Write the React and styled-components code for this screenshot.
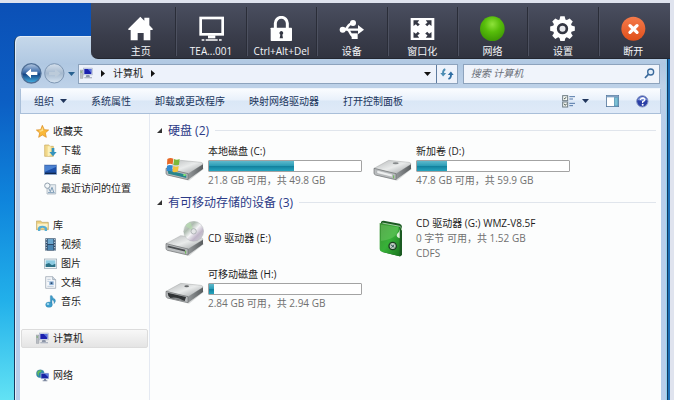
import React from "react";
import styled, { createGlobalStyle } from "styled-components";

const GlobalStyle = createGlobalStyle`
    * {
        box-sizing: border-box;
    }

    body {
        margin: 0;
        background: #dfe3ee;
        font-family: "Open Sans", "Noto Sans CJK SC", sans-serif;
        font-size: 10px;
        line-height: 15px;
        color: #1c1c1c;
    }

    button, input {
        font: inherit;
        color: inherit;
        border: 0;
        padding: 0;
        background: none;
    }

    a {
        color: inherit;
        text-decoration: none;
    }

    svg {
        display: block;
        flex: none;
    }
`

const Page = styled.div`
    position: relative;
    height: 100vh;
    padding: 3px 4px 0 0;
    overflow: hidden;
`

const Desktop = styled.div`
    display: flex;
    height: 100%;
    padding: 33px 2px 0 14px;
    background: linear-gradient(90deg, transparent 50%, #1c6fb8 50%),
        linear-gradient(#0b50b6 0%, #0c5fc4 25%, #0f85dc 50%, #22b0ea 75%, #62e2f4 100%);
`

const Dock = styled.div`
    position: absolute;
    top: 3px;
    right: 4px;
    left: 91px;
    display: flex;
    height: 56px;
    padding: 0 2px 0 15px;
    border-bottom: 1px solid #23262f;
    border-bottom-left-radius: 7px;
    background: linear-gradient(#4a4f60, #3a3d4b 60%, #30333f);
`

const DockButton = styled.button`
    display: flex;
    flex: 1 1 0;
    flex-direction: column;
    align-items: center;
    gap: 3px;
    margin: 4px 0 2px;
    padding-top: 9px;
    color: #f4f5f8;
    white-space: nowrap;

    & + & {
        border-left: 1px solid #2a2d38;
        box-shadow: inset 1px 0 #4d5160;
    }
`

const Window = styled.div`
    display: flex;
    flex: 1;
    flex-direction: column;
    min-width: 0;
    padding: 0 6px 0 5px;
    border: solid #16395f;
    border-width: 0 1px;
    border-radius: 6px 6px 0 0;
    background: linear-gradient(#c6d8ea 0, #b0c8e2 28px, #bdd1e8 50px, #b7cdeb 110px);
    box-shadow: inset 1px 1px #e2ecf6, inset -1px 0 #8fd0ee;
`

const AddressRow = styled.div`
    display: flex;
    align-items: center;
    gap: 3px;
    margin-top: 27px;
    padding: 0 1px;
`

const RoundButtons = styled.div`
    display: flex;
    gap: 2px;
`

const AddressBox = styled.div`
    display: flex;
    flex: 377;
    align-items: center;
    height: 20px;
    border: 1px solid #8da3bd;
    background: #edf2fb;
`

const Crumb = styled.button`
    display: flex;
    align-items: center;
    gap: 8px;
    padding-left: 1px;
`

const DropButton = styled.button`
    margin-left: auto;
    padding: 5px;
`

const RefreshButton = styled.button`
    display: flex;
    align-items: center;
    height: 18px;
    padding: 0 3px;
    border-left: 1px solid #5d7ba0;
`

const SearchBox = styled.label`
    display: flex;
    flex: 184;
    align-items: center;
    height: 20px;
    margin-left: 2px;
    padding: 0 4px 0 7px;
    border: 1px solid #8da3bd;
    background: #f0f4fb;
`

const SearchInput = styled.input`
    flex: 1;
    min-width: 0;
    font-style: italic;
    outline: none;

    &::placeholder {
        color: #6a6f78;
        opacity: 1;
    }
`

const Toolbar = styled.div`
    display: flex;
    align-items: center;
    gap: 24px;
    height: 26px;
    margin-top: 4px;
    padding: 0 11px 0 13px;
    border: 1px solid #a9bfd9;
    border-top-color: #eff5fc;
    background: linear-gradient(#fafcff, #e9f1fb 45%, #dae7f6 50%, #dfeaf8);
    color: #20355c;
`

const ToolButton = styled.button`
    display: flex;
    align-items: center;
    gap: 6px;
    white-space: nowrap;
`

const ViewTools = styled.div`
    display: flex;
    align-items: center;
    gap: 17px;
    margin-left: auto;
`

const Content = styled.div`
    display: flex;
    flex: 1;
    min-height: 0;
    background: #fcfdfd;
`

const Sidebar = styled.nav`
    display: flex;
    flex: none;
    flex-direction: column;
    gap: 18px;
    width: 130px;
    padding: 8px 1px;
    border-right: 1px solid #e4e9f2;
`

const SideLink = styled.a`
    display: flex;
    align-items: center;
    gap: 4px;
    height: 19px;
    padding-left: ${(props) => props.$nested ? "22px" : "14px"};
    border: 1px solid ${(props) => props.$selected ? "#dcdcdc" : "transparent"};
    border-radius: 2px;
    background: ${(props) => props.$selected ? "linear-gradient(#f8f8f8, #e4e4e4)" : "none"};
    white-space: nowrap;
`

const Main = styled.main`
    display: flex;
    flex: 1;
    flex-direction: column;
    gap: 4px;
    min-width: 0;
    padding: 6px 5px 0 7px;
`

const GroupTitle = styled.h2`
    display: flex;
    align-items: center;
    gap: 6px;
    height: 20px;
    margin: 0 0 4px;
    font-size: 12px;
    font-weight: 400;
    color: #2b3a87;
    white-space: nowrap;

    &::after {
        content: "";
        flex: 1;
        height: 1px;
        background: #e0e5ec;
    }
`

const Drives = styled.div`
    display: grid;
    grid-template-columns: repeat(auto-fill, 208px);
    grid-auto-rows: minmax(44px, auto);
    row-gap: 6px;
    padding-left: 8px;
`

const Drive = styled.div`
    display: flex;
    align-items: center;
    gap: 4px;
`

const DriveInfo = styled.div`
    display: flex;
    flex-direction: column;
    width: 154px;
    white-space: nowrap;
`

const Detail = styled.span`
    color: #707070;
`

const Meter = styled.div`
    height: 12px;
    margin: 1px 0;
    border: 1px solid #a3a3a3;
    border-radius: 1px;
    background: #fff;
`

const MeterFill = styled.div`
    height: 100%;
    background: linear-gradient(#5fb9cc, #2e9fb8 45%, #127e9b 50%, #25a5bf);
`

const HomeIcon = () => (
    <svg width="25" height="25" viewBox="0 0 75 75">
        <path d="M37 2L49 14V5H64V28L74 38V42H67V73H47V51H29V73H8V42H1V38Z" fill="#fff" />
    </svg>
)

const MonitorIcon = () => (
    <svg width="25" height="25" viewBox="0 0 75 75">
        <rect x="5" y="6" width="66" height="49" fill="none" stroke="#fff" strokeWidth="8" />
        <path d="M27 58H49V67H27Z" fill="#fff" />
        <path d="M8 72H16M20 72H56M60 72H68" stroke="#fff" strokeWidth="4" />
    </svg>
)

const LockIcon = () => (
    <svg width="25" height="25" viewBox="0 0 75 75">
        <path d="M19 38V22a18 18 0 0 1 36 0V38" fill="none" stroke="#fff" strokeWidth="9" />
        <rect x="5" y="35" width="64" height="40" rx="2" fill="#fff" />
        <path d="M37 45a6 6 0 0 1 3 11l2 11H32l2-11a6 6 0 0 1 3-11Z" fill="#343743" />
    </svg>
)

const UsbIcon = () => (
    <svg width="25" height="25" viewBox="0 0 75 75">
        <path d="M10 41H62M17 41C28 38 24 22 42 22M25 41C36 44 31 61 46 61" fill="none" stroke="#fff" strokeWidth="7" />
        <circle cx="11" cy="41" r="9" fill="#fff" />
        <circle cx="42" cy="21" r="9" fill="#fff" />
        <rect x="38" y="52" width="18" height="17" fill="#fff" />
        <path d="M57 27L75 41L57 55Z" fill="#fff" />
    </svg>
)

const WindowedIcon = () => (
    <svg width="25" height="25" viewBox="0 0 75 75">
        <rect x="2" y="6" width="71" height="66" fill="#fff" />
        {[[1, 1], [-1, 1], [1, -1], [-1, -1]].map(([x, y]) => (
            <path
                key={x + "," + y}
                transform={`translate(37.5 39) scale(${x} ${y})`}
                d="M8 14L14 8L20 14L27 9V26H10L15 19Z"
                fill="#343743"
            />
        ))}
    </svg>
)

const NetworkIcon = () => (
    <svg width="25" height="25" viewBox="0 0 75 75">
        <defs>
            <radialGradient id="ball" cx="50%" cy="32%" r="65%">
                <stop offset="0" stopColor="#8ee23a" />
                <stop offset="0.5" stopColor="#57bd0a" />
                <stop offset="1" stopColor="#3f9a05" />
            </radialGradient>
        </defs>
        <circle cx="37" cy="38" r="37" fill="url(#ball)" />
    </svg>
)

const GearIcon = () => (
    <svg width="25" height="25" viewBox="0 0 75 75">
        <g fill="#fff">
            {[0, 45, 90, 135].map(a => (
                <path key={a} transform={`rotate(${a} 37.5 38)`} d="M29 9L31 1H44L46 9V67L44 75H31L29 67Z" />
            ))}
            <circle cx="37.5" cy="38" r="29" />
        </g>
        <circle cx="37.5" cy="38" r="13" fill="#e9eaee" stroke="#343743" strokeWidth="8" />
    </svg>
)

const CloseIcon = () => (
    <svg width="25" height="25" viewBox="0 0 75 75">
        <defs>
            <linearGradient id="red" x2="0" y2="1">
                <stop offset="0" stopColor="#f47a4a" />
                <stop offset="1" stopColor="#e0501c" />
            </linearGradient>
        </defs>
        <circle cx="37" cy="38" r="36" fill="url(#red)" />
        <path d="M27 29L48 49M48 29L27 49" stroke="#fff" strokeWidth="10" strokeLinecap="round" />
    </svg>
)

const BackIcon = () => (
    <svg width="21" height="21" viewBox="0 0 63 63">
        <defs>
            <linearGradient id="back" x2="0" y2="1">
                <stop offset="0" stopColor="#b5c9e2" />
                <stop offset="0.45" stopColor="#3c6ba9" />
                <stop offset="0.55" stopColor="#154584" />
                <stop offset="1" stopColor="#46b4e6" />
            </linearGradient>
        </defs>
        <circle cx="31" cy="31" r="29" fill="url(#back)" stroke="#4f6f96" strokeWidth="4" />
        <path d="M14 31L30 17V26H49V36H30V46Z" fill="#fff" />
    </svg>
)

const ForwardIcon = () => (
    <svg width="21" height="21" viewBox="0 0 63 63">
        <defs>
            <linearGradient id="fwd" x2="0" y2="1">
                <stop offset="0" stopColor="#d5e0ec" />
                <stop offset="0.5" stopColor="#a5b9cf" />
                <stop offset="1" stopColor="#d6e4f1" />
            </linearGradient>
        </defs>
        <circle cx="31" cy="31" r="29" fill="url(#fwd)" stroke="#7f97b3" strokeWidth="3" />
        <path d="M49 31L33 18V27H15V36H33V45Z" fill="#bccbda" />
    </svg>
)

const DownArrow = ({ color = "#111" }) => (
    <svg width="7" height="4" viewBox="0 0 14 8">
        <path d="M0 0H14L7 8Z" fill={color} />
    </svg>
)

const RightArrow = () => (
    <svg width="4" height="7" viewBox="0 0 8 14">
        <path d="M0 0V14L8 7Z" fill="#111" />
    </svg>
)

const ComputerIcon = () => (
    <svg width="13" height="13" viewBox="0 0 39 39">
        <rect x="1" y="9" width="8" height="25" fill="#b9bdc2" stroke="#7e868e" />
        <rect x="2" y="13" width="3" height="4" fill="#5ba84b" />
        <rect x="10" y="3" width="27" height="21" fill="#cdd7ea" stroke="#8996b4" />
        <rect x="13" y="6" width="21" height="15" fill="#1a1fae" />
        <path d="M23 6H34V18Z" fill="#5570dc" />
        <path d="M19 24H28L30 31H17Z" fill="#8d96a8" />
        <path d="M13 32H36" stroke="#aeb5c2" strokeWidth="4" />
    </svg>
)

const RefreshIcon = () => (
    <svg width="14" height="14" viewBox="0 0 45 42">
        <path d="M17 5C9 8 9 14 10 21" fill="none" stroke="#4d8db3" strokeWidth="6" />
        <path d="M1 18H20L10 29Z" fill="#4d8db3" />
        <path d="M27 37C36 34 36 28 35 21" fill="none" stroke="#2f6ea3" strokeWidth="6" />
        <path d="M25 24H44L35 13Z" fill="#2f6ea3" />
    </svg>
)

const SearchIcon = () => (
    <svg width="11" height="11" viewBox="0 0 33 33">
        <circle cx="20" cy="12" r="9" fill="#e4effa" stroke="#3b6a9c" strokeWidth="4" />
        <path d="M13 19L3 30" stroke="#3b6a9c" strokeWidth="5" />
    </svg>
)

const ViewIcon = () => (
    <svg width="14" height="13" viewBox="0 0 42 39">
        <g fill="#f4f7f4" stroke="#6d7b82" strokeWidth="3">
            <rect x="2" y="2" width="15" height="15" />
            <rect x="2" y="21" width="15" height="15" />
        </g>
        <path d="M6 12L13 7M6 26L10 31L14 26" stroke="#4b5a50" strokeWidth="3" fill="none" />
        <path d="M22 5H39M22 12H33M22 25H39M22 32H33" stroke="#5277a8" strokeWidth="3" />
    </svg>
)

const PaneIcon = () => (
    <svg width="13" height="12" viewBox="0 0 39 36">
        <rect x="1" y="1" width="37" height="34" fill="#fff" stroke="#56789d" strokeWidth="3" />
        <rect x="2" y="2" width="35" height="5" fill="#7fa0c2" />
        <rect x="25" y="8" width="11" height="25" fill="#7cc0d4" stroke="#4b8db0" strokeWidth="2" />
    </svg>
)

const HelpIcon = () => (
    <svg width="13" height="13" viewBox="0 0 39 39">
        <circle cx="19" cy="19" r="17" fill="#2b3fa6" stroke="#8797c4" strokeWidth="3" />
        <path d="M5 15a15 15 0 0 1 28 0Q19 20 5 15Z" fill="#7f95da" />
        <path d="M13 15Q14 9 20 9Q27 10 26 15Q25 18 20 20V24" fill="none" stroke="#fff" strokeWidth="4" />
        <circle cx="20" cy="29" r="3" fill="#fff" />
    </svg>
)

const StarIcon = () => (
    <svg width="13" height="13" viewBox="0 0 39 39">
        <path d="M19 1L25 14L38 15L28 24L31 37L19 30L8 37L11 24L1 15L14 14Z" fill="#f9b93a" stroke="#d98a1d" strokeWidth="2" />
        <path d="M19 6L22 17L13 20L8 17L16 16Z" fill="#fde08c" />
    </svg>
)

const DownloadIcon = () => (
    <svg width="13" height="13" viewBox="0 0 39 39">
        <path d="M2 3H14L18 7H28V37H2Z" fill="#f1d88a" stroke="#c9a95a" strokeWidth="2" />
        <path d="M11 7H20V34L11 37Z" fill="#fbf0b9" />
        <path d="M23 12H31V24H38L27 37L16 24H23Z" fill="#3593bd" />
    </svg>
)

const DesktopIcon = () => (
    <svg width="13" height="13" viewBox="0 0 39 39">
        <rect x="1" y="6" width="37" height="28" fill="#1c4fa8" stroke="#7f9ac2" strokeWidth="2" />
        <path d="M3 8H36V12L3 26Z" fill="#4b82d2" />
        <path d="M3 31H36" stroke="#10294f" strokeWidth="4" />
    </svg>
)

const RecentIcon = () => (
    <svg width="13" height="13" viewBox="0 0 39 39">
        <path d="M9 8H35V36H9Z" fill="#e4eaef" stroke="#9caab6" strokeWidth="2" />
        <circle cx="10" cy="11" r="8" fill="#f4f8fa" stroke="#91a0ad" strokeWidth="3" />
        <path d="M14 19L19 29L24 16L29 30M12 32H32" stroke="#7d9cb6" strokeWidth="3" fill="none" />
    </svg>
)

const LibraryIcon = () => (
    <svg width="13" height="13" viewBox="0 0 39 39">
        <path d="M1 6H14L18 10H37V32H1Z" fill="#edcf7c" stroke="#b9a469" strokeWidth="2" />
        <path d="M4 14H35V26H4Z" fill="#fbf1c8" />
        <path d="M6 36V27Q8 20 19 20Q32 20 33 28V36H26V29Q20 24 13 29V36Z" fill="#58aed3" />
    </svg>
)

const VideoIcon = () => (
    <svg width="13" height="13" viewBox="0 0 39 39">
        <rect x="4" y="1" width="31" height="37" fill="#2e4a68" />
        <rect x="11" y="3" width="17" height="15" fill="#6ba6cd" />
        <rect x="11" y="21" width="17" height="15" fill="#4b85b1" />
        <path d="M7 3V38M32 3V38" stroke="#c9d8e4" strokeWidth="3" strokeDasharray="4 4" />
    </svg>
)

const PictureIcon = () => (
    <svg width="13" height="13" viewBox="0 0 39 39">
        <rect x="1" y="6" width="37" height="28" fill="#eef4f6" stroke="#91a3ae" strokeWidth="2" />
        <rect x="5" y="10" width="29" height="20" fill="#8ccbe2" />
        <path d="M5 30V22L15 18L24 25L34 20V30Z" fill="#2c7186" />
    </svg>
)

const DocumentIcon = () => (
    <svg width="13" height="13" viewBox="0 0 39 39">
        <path d="M5 2H26L35 11V37H5Z" fill="#f4f7fa" stroke="#8e9aa8" strokeWidth="2" />
        <path d="M26 2V11H35" fill="#ccd8e4" stroke="#8e9aa8" strokeWidth="2" />
        <path d="M10 10H20M10 16H15M10 31H29" stroke="#a3b5c8" strokeWidth="2" />
        <rect x="16" y="16" width="13" height="11" fill="#89aed4" />
        <rect x="20" y="19" width="5" height="5" fill="#29486c" />
    </svg>
)

const MusicIcon = () => (
    <svg width="13" height="13" viewBox="0 0 39 39">
        <path d="M19 28V2H24Q25 9 33 13Q37 19 30 26Q32 17 24 14V29" fill="#3e9cc8" stroke="#2674a3" strokeWidth="1" />
        <ellipse cx="15" cy="29" rx="10" ry="8" fill="#3c9fce" stroke="#25719e" />
        <ellipse cx="12" cy="27" rx="4" ry="3" fill="#a9dbef" />
    </svg>
)

const GlobeIcon = () => (
    <svg width="13" height="13" viewBox="0 0 39 39">
        <circle cx="13" cy="14" r="12" fill="#2987ad" stroke="#5c8da3" />
        <path d="M4 8Q12 1 18 5Q15 10 9 12L8 22Q2 17 4 8Z" fill="#66bb5a" />
        <path d="M15 13H38V29H15Z" fill="#1825a5" stroke="#aebddd" strokeWidth="2" />
        <path d="M26 14H37V25Z" fill="#5c7ce1" />
        <path d="M24 30H30V34H34V37H20V34H24Z" fill="#7d89a0" />
    </svg>
)

// top is where the drawing starts, the plain drives sit a little higher than the one with a disc
const DriveBody = ({ top = 7, children }) => (
    <svg width="39" height="36" viewBox={`0 ${top} 117 108`}>
        <defs>
            <linearGradient id="top" x2="1" y2="1">
                <stop offset="0" stopColor="#b4b7b8" />
                <stop offset="0.5" stopColor="#e9ebeb" />
                <stop offset="1" stopColor="#989c9e" />
            </linearGradient>
            <linearGradient id="side" x2="1" y2="0">
                <stop offset="0" stopColor="#94989a" />
                <stop offset="1" stopColor="#595d5f" />
            </linearGradient>
        </defs>
        <path d="M8 88L72 105L116 70L112 62L40 58Z" fill="#d8dada" />
        <path d="M3 68L47 44L108 50Q114 51 114 56L69 85Z" fill="url(#top)" stroke="#8b8e90" />
        <path d="M69 84L114 56V70L69 102Z" fill="url(#side)" />
        <path d="M3 68L69 84V102L7 88Q3 86 3 82Z" fill="#b9bcbe" stroke="#6b6e70" strokeWidth="2" />
        {children}
    </svg>
)

const SystemDriveIcon = () => (
    <DriveBody>
        <path d="M8 73L64 87V97L10 84Z" fill="#27858d" />
        <path d="M55 88H62" stroke="#8ff26d" strokeWidth="5" />
        <g transform="translate(1 9)">
            <path d="M6 31Q15 25 24 30L22 47Q14 43 5 48Z" fill="#e76a28" />
            <path d="M26 31Q34 36 43 31L41 48Q32 52 24 48Z" fill="#7bb93c" />
            <path d="M5 51Q13 47 22 51L20 69Q12 64 4 68Z" fill="#318bd2" />
            <path d="M24 52Q32 56 40 52L38 68Q30 73 22 69Z" fill="#f4c33a" />
        </g>
    </DriveBody>
)

const HardDriveIcon = () => (
    <DriveBody>
        <path d="M12 74L58 86V94L12 83Z" fill="#eef0f0" stroke="#929597" />
        <ellipse cx="68" cy="53" rx="9" ry="3" fill="#85898b" />
        <path d="M62 89V98" stroke="#65b64f" strokeWidth="3" />
    </DriveBody>
)

const CdDriveIcon = () => (
    <DriveBody top={0}>
        <defs>
            <linearGradient id="disc" x2="1" y2="1">
                <stop offset="0" stopColor="#d9dcdc" />
                <stop offset="0.3" stopColor="#aebcb0" />
                <stop offset="0.5" stopColor="#f4f4f6" />
                <stop offset="0.7" stopColor="#bfb5c8" />
                <stop offset="1" stopColor="#d2d7d8" />
            </linearGradient>
        </defs>
        <circle cx="86" cy="31" r="30" fill="url(#disc)" stroke="#a4a9ab" />
        <path d="M86 31L61 15Q66 6 76 3Z" fill="#b5dcae" opacity="0.7" />
        <circle cx="86" cy="31" r="8" fill="#e4e6e7" stroke="#999ea1" strokeWidth="2" />
        <path d="M8 76L60 89" stroke="#4a4d50" strokeWidth="5" />
        <path d="M62 89V98" stroke="#65b64f" strokeWidth="3" />
    </DriveBody>
)

const RemovableIcon = () => (
    <DriveBody>
        <path d="M8 72L63 85L59 97L16 88Q8 82 8 72Z" fill="#303335" />
        <path d="M16 88Q34 83 58 97Z" fill="#85898b" />
        <ellipse cx="65" cy="53" rx="7" ry="3" fill="#65686a" />
    </DriveBody>
)

const MediaIcon = () => (
    <svg width="39" height="40" viewBox="0 0 117 120">
        <defs>
            <linearGradient id="box" x2="1" y2="1">
                <stop offset="0" stopColor="#3d8f35" />
                <stop offset="0.5" stopColor="#37b138" />
                <stop offset="1" stopColor="#19761f" />
            </linearGradient>
        </defs>
        <path d="M24 9Q26 5 32 5L80 14Q87 16 87 24V106Q86 113 79 112L28 99Z" fill="#1b5a22" />
        <path d="M20 12L73 20Q80 22 80 29V112L26 98Q20 96 20 90Z" fill="url(#box)" />
        <path d="M24 17L76 25Q78 60 24 66Z" fill="#7ed070" opacity="0.4" />
        <path d="M80 31V58Q68 53 72 45Q79 42 80 31Z" fill="#dff0da" />
        <circle cx="59" cy="81" r="11" fill="#c3cfc4" stroke="#193e20" strokeWidth="4" />
        <path d="M53 77L64 85M63 77L56 86" stroke="#365d5a" strokeWidth="3" />
        <path d="M28 12L81 22Q86 25 86 34" fill="none" stroke="#a2cda1" strokeWidth="3" />
    </svg>
)

const dockItems = [
    { label: "主页", Icon: HomeIcon },
    { label: "TEA...001", Icon: MonitorIcon },
    { label: "Ctrl+Alt+Del", Icon: LockIcon },
    { label: "设备", Icon: UsbIcon },
    { label: "窗口化", Icon: WindowedIcon },
    { label: "网络", Icon: NetworkIcon },
    { label: "设置", Icon: GearIcon },
    { label: "断开", Icon: CloseIcon },
]

const places = [
    [
        { label: "收藏夹", Icon: StarIcon },
        { label: "下载", Icon: DownloadIcon, nested: true },
        { label: "桌面", Icon: DesktopIcon, nested: true },
        { label: "最近访问的位置", Icon: RecentIcon, nested: true },
    ],
    [
        { label: "库", Icon: LibraryIcon },
        { label: "视频", Icon: VideoIcon, nested: true },
        { label: "图片", Icon: PictureIcon, nested: true },
        { label: "文档", Icon: DocumentIcon, nested: true },
        { label: "音乐", Icon: MusicIcon, nested: true },
    ],
    [{ label: "计算机", Icon: ComputerIcon, selected: true }],
    [{ label: "网络", Icon: GlobeIcon }],
]

const groups = [
    {
        title: "硬盘 (2)",
        drives: [
            { name: "本地磁盘 (C:)", Icon: SystemDriveIcon, used: 56, details: ["21.8 GB 可用，共 49.8 GB"] },
            { name: "新加卷 (D:)", Icon: HardDriveIcon, used: 20, details: ["47.8 GB 可用，共 59.9 GB"] },
        ],
    },
    {
        title: "有可移动存储的设备 (3)",
        drives: [
            { name: "CD 驱动器 (E:)", Icon: CdDriveIcon, details: [] },
            { name: "CD 驱动器 (G:) WMZ-V8.5F", Icon: MediaIcon, details: ["0 字节 可用，共 1.52 GB", "CDFS"] },
            { name: "可移动磁盘 (H:)", Icon: RemovableIcon, used: 3, details: ["2.84 GB 可用，共 2.94 GB"] },
        ],
    },
]

function App() {

    const renderDrive = ({ name, Icon, used, details }) => (
        <Drive key={name}>
            <Icon />
            <DriveInfo>
                <span>{name}</span>
                {used !== undefined && (
                    <Meter role="meter" aria-label={name} aria-valuenow={used} aria-valuemin={0} aria-valuemax={100}>
                        <MeterFill style={{ width: used + "%" }} />
                    </Meter>
                )}
                {details.map(d => <Detail key={d}>{d}</Detail>)}
            </DriveInfo>
        </Drive>
    )

    return (
        <Page>
            <GlobalStyle />
            <Desktop>
                <Window>
                    <AddressRow>
                        <RoundButtons>
                            <button aria-label="后退"><BackIcon /></button>
                            <button aria-label="前进"><ForwardIcon /></button>
                        </RoundButtons>
                        <button aria-label="历史"><DownArrow color="#27608f" /></button>
                        <AddressBox>
                            <Crumb>
                                <ComputerIcon />
                                <RightArrow />
                                计算机
                                <RightArrow />
                            </Crumb>
                            <DropButton aria-label="地址"><DownArrow /></DropButton>
                            <RefreshButton aria-label="刷新"><RefreshIcon /></RefreshButton>
                        </AddressBox>
                        <SearchBox>
                            <SearchInput type="text" aria-label="搜索" placeholder="搜索 计算机" />
                            <SearchIcon />
                        </SearchBox>
                    </AddressRow>
                    <Toolbar>
                        <ToolButton>组织 <DownArrow color="#20355c" /></ToolButton>
                        <ToolButton>系统属性</ToolButton>
                        <ToolButton>卸载或更改程序</ToolButton>
                        <ToolButton>映射网络驱动器</ToolButton>
                        <ToolButton>打开控制面板</ToolButton>
                        <ViewTools>
                            <ToolButton aria-label="视图"><ViewIcon /><DownArrow color="#20355c" /></ToolButton>
                            <ToolButton aria-label="预览窗格"><PaneIcon /></ToolButton>
                            <ToolButton aria-label="帮助"><HelpIcon /></ToolButton>
                        </ViewTools>
                    </Toolbar>
                    <Content>
                        <Sidebar>
                            {places.map((group, key) => (
                                <div key={key}>
                                    {group.map(({ label, Icon, nested, selected }) => (
                                        <SideLink href="#" key={label} $nested={nested} $selected={selected}>
                                            <Icon />
                                            {label}
                                        </SideLink>
                                    ))}
                                </div>
                            ))}
                        </Sidebar>
                        <Main>
                            {groups.map(({ title, drives }) => (
                                <section key={title}>
                                    <GroupTitle>
                                        <svg width="5" height="5" viewBox="0 0 5 5">
                                            <path d="M5 0V5H0Z" fill="#333" />
                                        </svg>
                                        {title}
                                    </GroupTitle>
                                    <Drives>{drives.map(renderDrive)}</Drives>
                                </section>
                            ))}
                        </Main>
                    </Content>
                </Window>
            </Desktop>
            <Dock>
                {dockItems.map(({ label, Icon }) => (
                    <DockButton key={label}>
                        <Icon />
                        {label}
                    </DockButton>
                ))}
            </Dock>
        </Page>
    )
}

export default App
